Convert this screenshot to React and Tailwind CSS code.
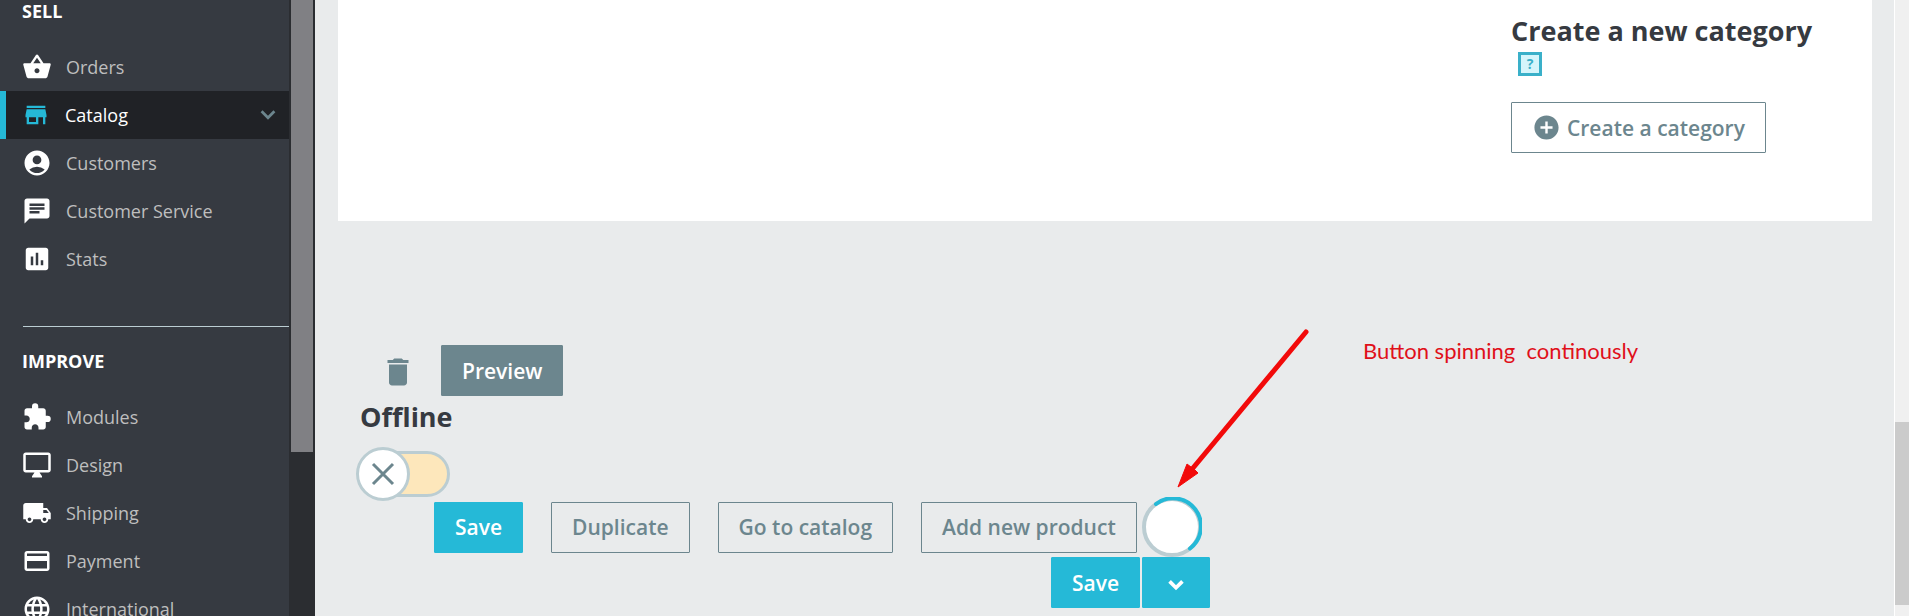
import React from "react";
import {
  MdShoppingBasket, MdAccountCircle, MdChat, MdAssessment, MdExtension,
  MdLocalShipping, MdPayment, MdLanguage, MdAddCircle,
} from "react-icons/md";

function StoreIcon({ className }) {
  return (
    <svg aria-hidden="true" viewBox="0 0 24 24" fill="currentColor" className={className}>
      <path d="M20 4H4v2h16V4zm1 10v-2l-1-5H4l-1 5v2h1v6h10v-6h4v6h2v-6h1zm-9 4H6v-4h6v4z" />
    </svg>
  );
}

function MonitorIcon({ className }) {
  return (
    <svg aria-hidden="true" viewBox="0 0 24 24" fill="currentColor" className={className}>
      <path d="M21 2H3c-1.1 0-2 .9-2 2v12c0 1.1.9 2 2 2h7l-2 3v1h8v-1l-2-3h7c1.1 0 2-.9 2-2V4c0-1.1-.9-2-2-2zm0 14H3V4h18v12z" />
    </svg>
  );
}

function TrashIcon({ className }) {
  return (
    <svg aria-hidden="true" viewBox="0 0 24 24" fill="currentColor" className={className}>
      <path d="M6 19c0 1.1.9 2 2 2h8c1.1 0 2-.9 2-2V7H6v12zM19 4h-3.500l-1-1h-5l-1 1H5v2h14V4z" />
    </svg>
  );
}

function Chevron({ className, weight }) {
  return (
    <svg aria-hidden="true" viewBox="0 0 24 24" fill="none" stroke="currentColor" strokeWidth={weight} className={className}>
      <path d="M5 8l7 7 7-7" />
    </svg>
  );
}

const sell = [
  { label: "Orders", Icon: MdShoppingBasket },
  { label: "Catalog", Icon: StoreIcon, active: true },
  { label: "Customers", Icon: MdAccountCircle },
  { label: "Customer Service", Icon: MdChat },
  { label: "Stats", Icon: MdAssessment },
];

const improve = [
  { label: "Modules", Icon: MdExtension },
  { label: "Design", Icon: MonitorIcon },
  { label: "Shipping", Icon: MdLocalShipping },
  { label: "Payment", Icon: MdPayment },
  { label: "International", Icon: MdLanguage },
];

function NavItem({ label, Icon, active }) {
  if (active) {
    return (
      <li>
        <a href="#" aria-current="page" className="flex h-12 items-center gap-[15px] border-l-6 border-[#25b9d7] bg-[#202226] pl-4 pr-[10px] text-white">
          <Icon className="size-7 text-[#25b9d7]" />
          <span className="flex-1">{label}</span>
          <Chevron className="size-[22px] text-[#6c868e]" weight="3" />
        </a>
      </li>
    );
  }
  return (
    <li>
      <a href="#" className="flex h-12 items-center gap-[14px] pl-[22px] text-[#bebebe]">
        <Icon className="size-[30px] text-white" />
        <span>{label}</span>
      </a>
    </li>
  );
}

function NavSection({ title, items }) {
  return (
    <section>
      <h2 className="mb-5 pl-[22px] text-lg leading-[23px] font-bold text-white">{title}</h2>
      <ul>
        {items.map((item) => (
          <NavItem key={item.label} {...item} />
        ))}
      </ul>
    </section>
  );
}

function Button({ variant = "outline", className = "px-5", children, ...props }) {
  const look = {
    outline: "border-[#6c868e] text-[#6c868e]",
    primary: "border-[#25b9d7] bg-[#25b9d7] text-white",
    secondary: "border-[#6c868e] bg-[#6c868e] text-white",
  }[variant];
  return (
    <button type="button" className={`flex h-[51px] items-center rounded-[1px] border text-[21px] leading-7 font-semibold whitespace-nowrap ${look} ${className}`} {...props}>
      {children}
    </button>
  );
}

export default function App() {
  return (
    <div className="flex h-screen overflow-hidden bg-[#e9ebec] font-['Open_Sans',sans-serif]">
      <aside className="flex w-[315px] shrink-0 bg-[#363a41]">
        <nav className="min-w-0 flex-1 overflow-hidden text-lg">
          <NavSection title="SELL" items={sell} />
          <hr className="mt-[43px] mb-[23px] ml-[23px] border-[#bbcdd2]" />
          <NavSection title="IMPROVE" items={improve} />
        </nav>
        <div className="w-[26px] bg-[#2b2d31] px-0.5">
          <div className="h-[452px] bg-[#808084]" />
        </div>
      </aside>

      <main className="relative min-w-0 flex-1 pl-[23px]">
        <section className="mr-[22px] flex h-[221px] justify-end bg-white">
          <div className="w-[361px] pt-3">
            <h2 className="text-[27px] leading-[38px] font-bold text-[#363a41]">Create a new category</h2>
            <button type="button" aria-label="Help" className="mt-0.5 ml-[7px] flex size-6 items-center justify-center border-3 border-[#3ab0c9] bg-[#d5f5fb] text-sm leading-4 font-bold text-[#3ab0c9]">?</button>
            <Button className="mt-[26px] gap-1.5 px-5">
              <MdAddCircle className="size-[29px]" />
              <span>Create a category</span>
            </Button>
          </div>
        </section>

        <section className="mt-[124px]">
          <div className="flex items-center pl-[42px]">
            <button type="button" aria-label="Delete" className="mr-[25px] pt-0.5 text-[#6c868e]">
              <TrashIcon className="size-9" />
            </button>
            <Button variant="secondary">Preview</Button>
          </div>
          <label className="flex w-fit flex-col pl-[18px]">
            <span className="pl-1 text-[27px] leading-[42px] font-bold text-[#363a41]">Offline</span>
            <span className="mt-[9px] flex h-[54px] w-[94px] items-center">
              <input type="checkbox" role="switch" className="sr-only" />
              <span className="z-10 flex size-[54px] shrink-0 items-center justify-center rounded-full border-3 border-[#bbcdd2] bg-white text-[#6c868e]">
                <svg aria-hidden="true" viewBox="0 0 24 24" fill="none" stroke="currentColor" strokeWidth="3" className="size-6">
                  <path d="M2 2L22 22M22 2L2 22" />
                </svg>
              </span>
              <span className="-ml-10 h-[46px] flex-1 rounded-full border-3 border-[#bbcdd2] bg-[#fde7bb]" />
            </span>
          </label>
          <div className="-mt-1 flex h-[60px] items-center gap-7 pl-24">
            <Button variant="primary">Save</Button>
            <Button>Duplicate</Button>
            <Button>Go to catalog</Button>
            <div className="flex items-center gap-[5px]">
              <Button>Add new product</Button>
              <svg role="status" aria-label="Saving" viewBox="0 0 60 60" className="size-[60px]">
                <circle cx="30" cy="30" r="28" fill="#fff" stroke="#bbcdd2" strokeWidth="4" />
                <path d="M14 7A28 28 0 0 1 48 51.5" fill="none" stroke="#25b9d7" strokeWidth="4" strokeLinecap="round" />
              </svg>
            </div>
          </div>
          <div className="flex gap-0.5 pl-[713px]">
            <Button variant="primary">Save</Button>
            <Button variant="primary" aria-label="More save options" className="px-[22px] pt-1">
              <Chevron className="size-[22px]" weight="4" />
            </Button>
          </div>
        </section>

        <svg aria-hidden="true" viewBox="0 0 145 170" className="absolute top-[324px] left-[855px] h-[170px] w-[145px]">
          <path d="M136 8L23 144" stroke="#f20a0a" strokeWidth="5" strokeLinecap="round" />
          <path d="M8 163L17 140L21 143L25 146L28 149Z" fill="#f20a0a" stroke="#f20a0a" />
        </svg>
        <p className="absolute top-[337px] left-[1048px] font-['Lato',sans-serif] text-[22px] leading-7 whitespace-pre text-[#e0101a]">Button spinning  continously</p>
      </main>

      <div className="flex w-[15px] shrink-0 flex-col border-l border-white bg-[#f0f0f0]">
        <div className="mt-auto mb-[11px] h-[183px] bg-[#cbcbcb]" />
      </div>
    </div>
  );
}
